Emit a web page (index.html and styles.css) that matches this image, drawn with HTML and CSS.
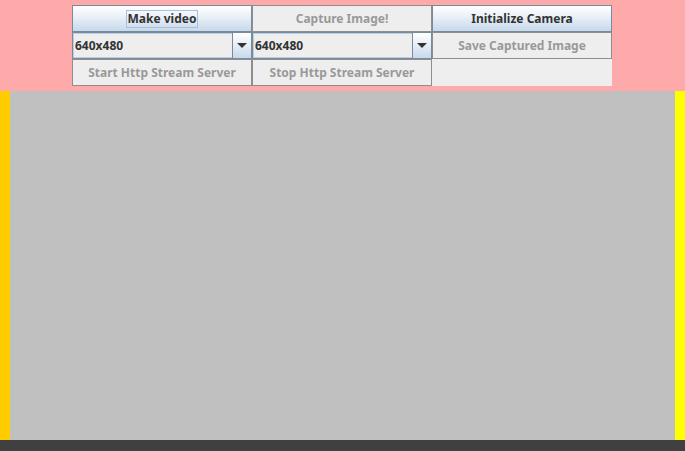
FILE: index.html
```html
<!DOCTYPE html>
<html>
<head>
<meta charset="utf-8">
<link rel="stylesheet" href="styles.css">
</head>
<body>
<div class="top">
  <div class="grid">
    <div class="btn enabled"><span class="focus">Make video</span></div>
    <div class="btn disabled">Capture Image!</div>
    <div class="btn enabled">Initialize Camera</div>
    <div class="combo"><span class="value">640x480</span><span class="arrow"><span class="tri"></span></span></div>
    <div class="combo"><span class="value">640x480</span><span class="arrow"><span class="tri"></span></span></div>
    <div class="btn disabled">Save Captured Image</div>
    <div class="btn disabled">Start Http Stream Server</div>
    <div class="btn disabled">Stop Http Stream Server</div>
    <div class="empty"></div>
  </div>
</div>
<div class="middle">
  <div class="side-left"></div>
  <div class="canvas"></div>
  <div class="side-right"></div>
</div>
<div class="bottom"></div>
</body>
</html>
```
FILE: styles.css
```css
* { box-sizing: border-box; }
html, body { margin: 0; padding: 0; }
body {
  width: 685px;
  height: 451px;
  overflow: hidden;
  display: flex;
  flex-direction: column;
  font-family: "Noto Sans", "DejaVu Sans", sans-serif;
  font-size: 12px;
  font-weight: bold;
}
.top {
  height: 91px;
  background: #ffaaaa;
  padding-top: 5px;
  padding-left: 72px;
}
.grid {
  display: grid;
  grid-template-columns: 180px 180px 180px;
  grid-template-rows: 27px 27px 27px;
}
.btn {
  display: flex;
  align-items: center;
  justify-content: center;
  border: 1px solid #7a8a99;
  white-space: nowrap;
}
.btn.enabled {
  background: linear-gradient(to bottom, #ffffff 0%, #eef3f9 35%, #c7d9ec 100%);
  color: #333333;
}
.btn.disabled {
  background: #eeeeee;
  color: #999999;
  border-color: #8e8e8e;
}
.focus {
  border: 1px solid #a8c0dc;
  padding: 0 1px;
  line-height: 16px;
}
.combo {
  display: flex;
  border: 1px solid #7a8a99;
  background: #eeeeee;
  color: #333333;
}
.value {
  flex: 1;
  display: flex;
  align-items: center;
  padding-left: 1px;
  border: 1px solid #b8cfe5;
  border-right: none;
}
.arrow {
  width: 19px;
  border-left: 1px solid #7a8a99;
  background: linear-gradient(to bottom, #ffffff 0%, #eef3f9 35%, #c7d9ec 100%);
  display: flex;
  align-items: center;
  justify-content: center;
}
.tri {
  width: 0;
  height: 0;
  border-left: 5px solid transparent;
  border-right: 5px solid transparent;
  border-top: 5px solid #333333;
}
.empty {
  background: #eeeeee;
}
.middle {
  flex: 1;
  display: flex;
}
.side-left { width: 10px; background: #ffcc00; }
.canvas { flex: 1; background: #c0c0c0; }
.side-right { width: 10px; background: #ffff00; }
.bottom { height: 11px; background: #404040; }
```
